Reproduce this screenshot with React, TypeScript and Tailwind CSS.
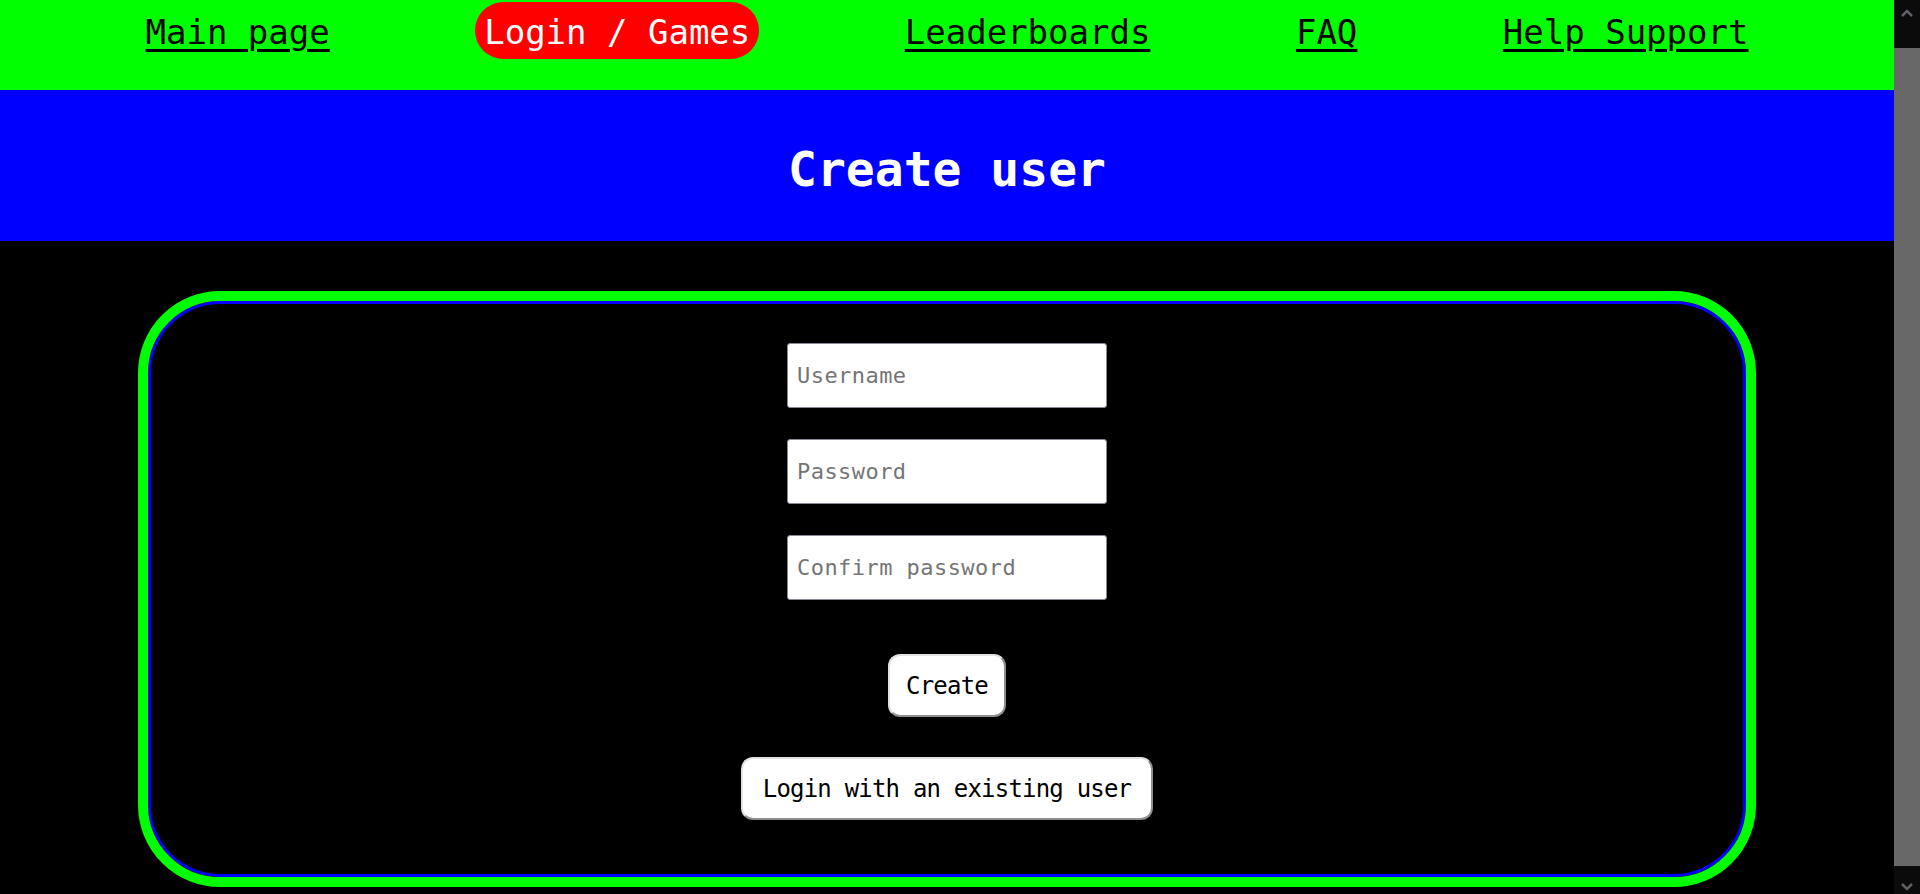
const links = [
  { label: "Main page", active: false },
  { label: "Login / Games", active: true },
  { label: "Leaderboards", active: false },
  { label: "FAQ", active: false },
  { label: "Help Support", active: false },
];

const fields = [
  { name: "username", type: "text", placeholder: "Username" },
  { name: "password", type: "password", placeholder: "Password" },
  { name: "confirm", type: "password", placeholder: "Confirm password" },
];

function Scrollbar() {
  return (
    <div className="flex w-[26px] shrink-0 flex-col bg-[#0b0b0c]">
      <div className="flex h-[26px] items-center justify-center">
        <svg width="14" height="10" viewBox="0 0 14 10" fill="none">
          <path d="M2 8 L7 3 L12 8" stroke="#5f5f66" strokeWidth="2.5" />
        </svg>
      </div>
      <div className="h-[22px]" />
      <div className="flex-1 bg-[#686868]" />
      <div className="flex h-[28px] items-end justify-center pb-[2px]">
        <svg width="14" height="10" viewBox="0 0 14 10" fill="none">
          <path d="M2 2 L7 7 L12 2" stroke="#5f5f66" strokeWidth="2.5" />
        </svg>
      </div>
    </div>
  );
}

export default function App() {
  return (
    <div className="flex h-screen overflow-hidden bg-black font-['DejaVu_Sans_Mono',monospace]">
      <div className="min-w-0 flex-1">
        <nav className="flex h-[90px] items-start justify-evenly bg-[#00ff00] pt-[2px]">
          {links.map((link) =>
            link.active ? (
              <a
                key={link.label}
                href="#"
                className="rounded-full bg-[#ff0000] px-[9px] pt-[10px] pb-[7px] text-[34px] leading-[40px] text-white no-underline"
              >
                {link.label}
              </a>
            ) : (
              <a
                key={link.label}
                href="#"
                className="pt-[10px] pb-[7px] text-[34px] leading-[40px] text-black underline decoration-[3px] underline-offset-[5px]"
              >
                {link.label}
              </a>
            )
          )}
        </nav>

        <header className="flex h-[151px] items-center justify-center bg-[#0000ff] pt-[6px]">
          <h1 className="text-[48px] font-bold text-white">Create user</h1>
        </header>

        <main className="px-[138px] pt-[50px] pb-[10px]">
          <form
            className="flex flex-col items-center rounded-[82px] border-[10px] border-[#00ff00] pt-[42px] pb-[57px] shadow-[inset_0_0_0_3px_#0000ff]"
            onSubmit={(e) => e.preventDefault()}
          >
            <div className="flex flex-col gap-[31px]">
              {fields.map((f) => (
                <input
                  key={f.name}
                  name={f.name}
                  type={f.type}
                  placeholder={f.placeholder}
                  className="h-[65px] w-[320px] rounded-[3px] border border-[#8a8a96] bg-white px-[9px] text-[22px] tracking-[0.45px] text-black outline-none placeholder:text-[#757575]"
                />
              ))}
            </div>

            <button
              type="submit"
              className="mt-[54px] h-[63px] w-[118px] rounded-[12px] border-2 border-t-[#e2e2e2] border-l-[#e2e2e2] border-r-[#8e8e8e] border-b-[#8e8e8e] bg-white text-[24px] tracking-[-0.8px] text-black"
            >
              Create
            </button>

            <button
              type="button"
              className="mt-[40px] h-[63px] w-[412px] rounded-[12px] border-2 border-t-[#e2e2e2] border-l-[#e2e2e2] border-r-[#8e8e8e] border-b-[#8e8e8e] bg-white text-[24px] tracking-[-0.8px] text-black"
            >
              Login with an existing user
            </button>
          </form>
        </main>
      </div>
      <Scrollbar />
    </div>
  );
}
